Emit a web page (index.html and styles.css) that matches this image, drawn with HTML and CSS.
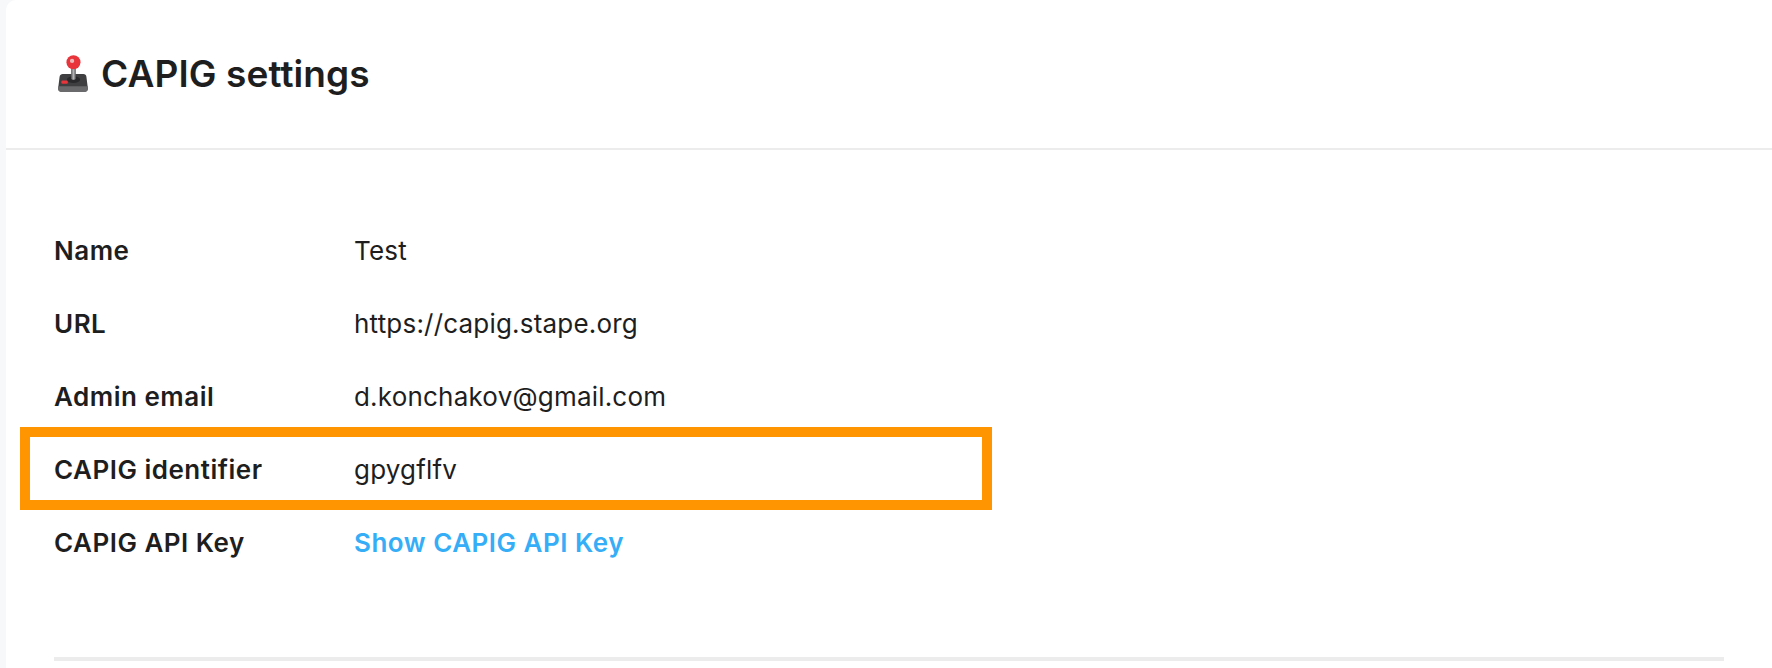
FILE: index.html
```html
<!DOCTYPE html>
<html>
<head>
    <title>CAPIG settings</title>
    <link rel="stylesheet" href="styles.css">
</head>

<body>

    <div class="card">
        <div class="card-header">
            <svg class="joystick" viewBox="0 0 32 40" aria-hidden="true">
                <defs>
                    <linearGradient id="stick" x1="0" x2="1" y1="0" y2="0">
                        <stop offset="0" stop-color="#5b5b5e"/>
                        <stop offset="0.5" stop-color="#b4b4b6"/>
                        <stop offset="1" stop-color="#5b5b5e"/>
                    </linearGradient>
                </defs>
                <path d="M5 20h22c2 0 3 1 3.300 3l1.500 12c.3 2-1 4-3 4H3.200c-2 0-3.300-2-3-4l1.500-12C2 21 3.500 20 5 20z" fill="#3f3f42"/>
                <path d="M.3 33h31.400l.2 3c0 2-1.500 3-3.500 3H3.600c-2 0-3.500-1-3.500-3z" fill="#6a6a6d"/>
                <ellipse cx="16.500" cy="26" rx="7" ry="3.500" fill="#29292b"/>
                <rect x="14" y="13" width="5" height="13" rx="1.500" fill="url(#stick)"/>
                <circle cx="16.500" cy="7.500" r="7.500" fill="#e8343a"/>
                <circle cx="15" cy="6" r="2.300" fill="#e9b9b9"/>
                <rect x="3.500" y="27" width="7" height="3.500" rx="1.500" fill="#e8343a"/>
            </svg>
            <h1>CAPIG settings</h1>
        </div>

        <div class="card-body">
            <div class="info-row">
                <span class="info-label">Name</span>
                <span class="info-value">Test</span>
            </div>
            <div class="info-row">
                <span class="info-label">URL</span>
                <span class="info-value">https://capig.stape.org</span>
            </div>
            <div class="info-row">
                <span class="info-label">Admin email</span>
                <span class="info-value">d.konchakov@gmail.com</span>
            </div>
            <div class="info-row">
                <span class="info-label">CAPIG identifier</span>
                <span class="info-value">gpygflfv</span>
                <div class="highlight-box"></div>
            </div>
            <div class="info-row">
                <span class="info-label">CAPIG API Key</span>
                <a href="#" class="info-link">Show CAPIG API Key</a>
            </div>
            <div class="bottom-line"></div>
        </div>
    </div>

</body>
</html>
```

FILE: styles.css
```css
body {
    background-color: #f7f8fa;
    font-family: Inter, "Liberation Sans", sans-serif;
    color: #1e1e1e;
    margin: 0;
    padding: 0;
    height: 668px;
    overflow: hidden;
}

.card {
    background-color: white;
    margin-left: 6px;
    height: 668px;
    border-top-left-radius: 10px;
}

.card-header {
    display: flex;
    align-items: center;
    gap: 13px;
    height: 148px;
    padding-left: 52px;
    border-bottom: 2px solid #ececec;
}

.joystick {
    width: 30px;
    height: 38px;
}

.card-header h1 {
    font-size: 37px;
    font-weight: 600;
    letter-spacing: 0.1px;
    margin: 0 0 2px 0;
}

.card-body {
    padding: 64px 48px 0 48px;
}

.info-row {
    position: relative;
    display: flex;
    align-items: center;
    height: 73px;
    font-size: 26px;
    letter-spacing: 0.2px;
}

.info-label {
    width: 300px;
    font-weight: 600;
    letter-spacing: 0.5px;
}

.info-link {
    color: #35adf7;
    font-weight: 600;
    letter-spacing: 0.5px;
    text-decoration: none;
}

.highlight-box {
    position: absolute;
    left: -34px;
    top: -6px;
    width: 952px;
    height: 63px;
    border: 10px solid #ff9500;
}

.bottom-line {
    height: 4px;
    background-color: #ececec;
    margin-top: 78px;
}
```
